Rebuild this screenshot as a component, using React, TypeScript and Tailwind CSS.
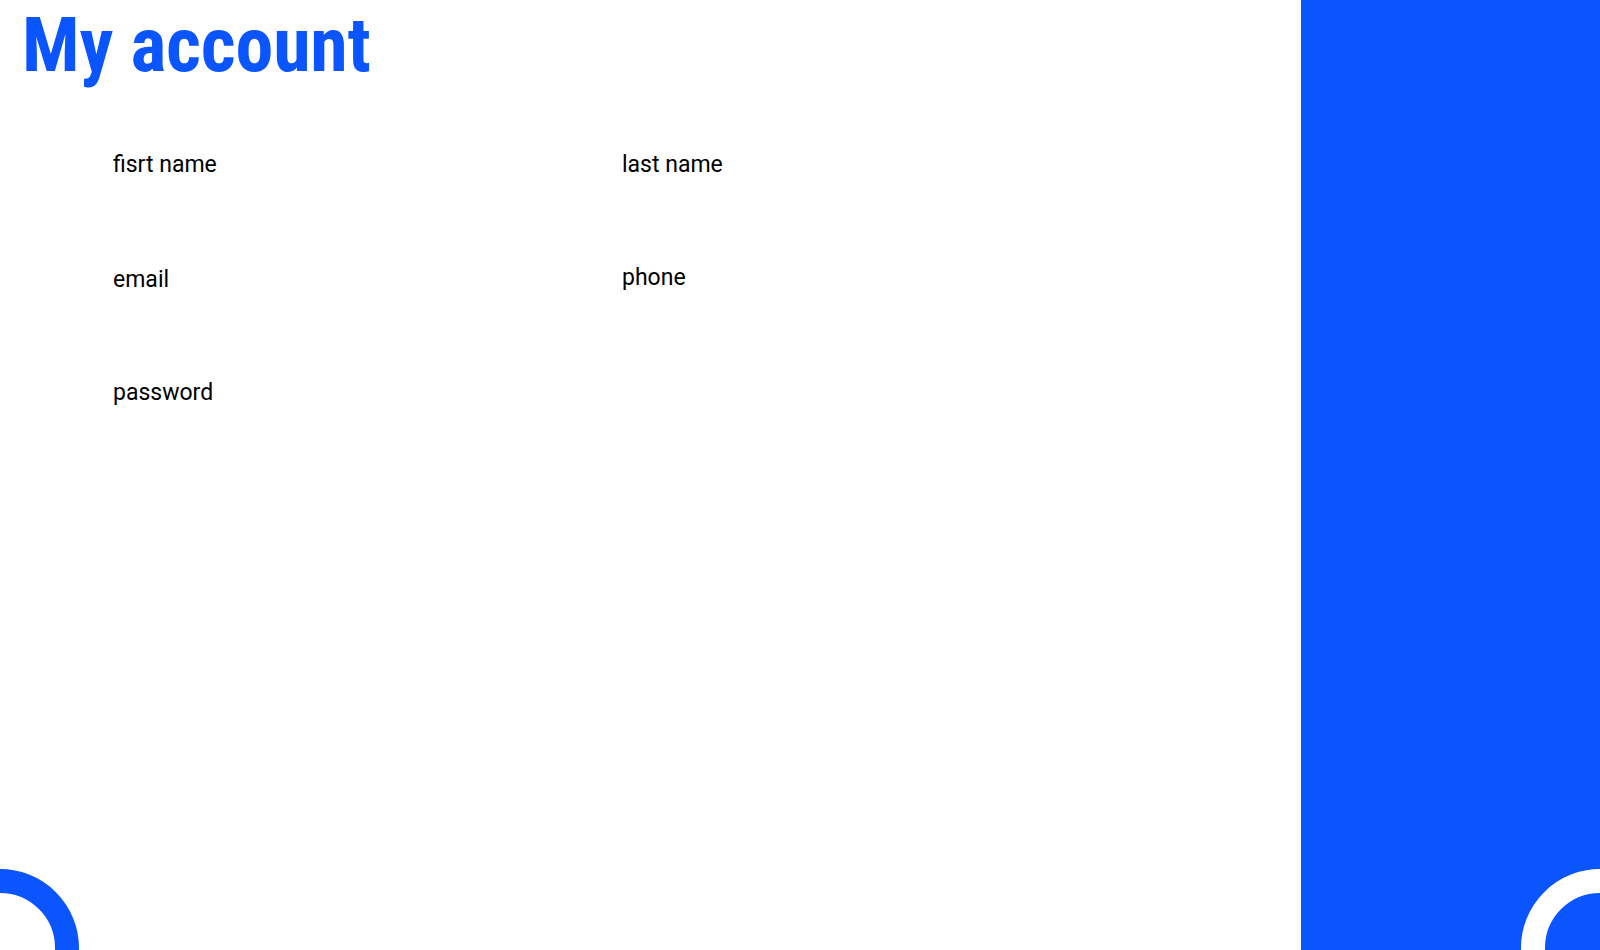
import React from 'react';

const Field = ({ label, className = '' }: { label: string; className?: string }) => (
  <div className={'flex flex-col ' + className}>
    <label className="text-[23px] leading-[28px] text-black">{label}</label>
    <input className="mt-1 w-[380px] h-[40px] outline-none bg-transparent" aria-label={label} />
  </div>
);

export default function App() {
  return (
    <div className="relative flex w-full h-[950px] overflow-hidden bg-white font-['Roboto',sans-serif]">
      <main className="flex-1 flex flex-col">
        <h1 className="pl-[22px] pt-[7px] text-[76px] leading-none font-bold font-stretch-condensed text-[#0b55ff] tracking-[-0.2px]">
          My account
        </h1>
        <form className="mt-[68px] pl-[113px] grid grid-cols-[509px_1fr]">
          <div className="flex flex-col">
            <Field label="fisrt name" className="h-[115px]" />
            <Field label="email" className="h-[113px]" />
            <Field label="password" className="h-[112px]" />
          </div>
          <div className="flex flex-col">
            <Field label="last name" className="h-[113px]" />
            <Field label="phone" className="h-[112px]" />
          </div>
        </form>
      </main>
      <aside className="relative w-[299px] h-full bg-[#0b55ff]">
        <div className="absolute left-[220px] top-[869px] w-[158px] h-[158px] rounded-full border-[24px] border-white" />
      </aside>
      <div className="absolute -left-[79px] top-[869px] w-[158px] h-[158px] rounded-full border-[24px] border-[#0b55ff]" />
    </div>
  );
}
